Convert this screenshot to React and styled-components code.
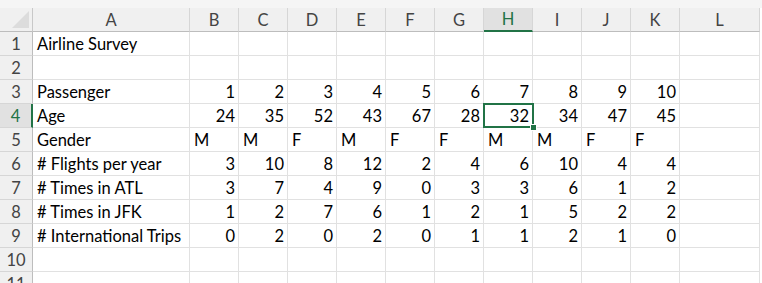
import React from "react";
import styled, { createGlobalStyle, css } from "styled-components";

const GlobalStyle = createGlobalStyle`
  html, body {
    margin: 0;
    padding: 0;
    background: #ffffff;
    overflow: hidden;
  }
  body {
    font-family: "Lato", "Liberation Sans", sans-serif;
  }
`;

const columns = ["A", "B", "C", "D", "E", "F", "G", "H", "I", "J", "K", "L"];

const rows = [
  ["Airline Survey"],
  [],
  ["Passenger", 1, 2, 3, 4, 5, 6, 7, 8, 9, 10],
  ["Age", 24, 35, 52, 43, 67, 28, 32, 34, 47, 45],
  ["Gender", "M", "M", "F", "M", "F", "F", "M", "M", "F", "F"],
  ["# Flights per year", 3, 10, 8, 12, 2, 4, 6, 10, 4, 4],
  ["# Times in ATL", 3, 7, 4, 9, 0, 3, 3, 6, 1, 2],
  ["# Times in JFK", 1, 2, 7, 6, 1, 2, 1, 5, 2, 2],
  ["# International Trips", 0, 2, 0, 2, 0, 1, 1, 2, 1, 0],
  [],
  [],
];

const activeCol = 7; // H
const activeRow = 4;

function App() {
  return (
    <>
      <GlobalStyle />
      <Sheet>
        <TopStrip />
        <Corner>
          <CornerTriangle viewBox="0 0 18 18">
            <polygon points="18,0 18,18 0,18" fill="#dcdcdc" />
          </CornerTriangle>
        </Corner>
        {columns.map((c, i) => (
          <ColHeader key={c} $active={i === activeCol}>
            {c}
          </ColHeader>
        ))}
        {rows.map((row, r) => (
          <React.Fragment key={r}>
            <RowHeader $active={r + 1 === activeRow}>{r + 1}</RowHeader>
            {columns.map((c, i) => {
              const v = row[i];
              const isNum = typeof v === "number";
              return (
                <Cell
                  key={c}
                  $align={isNum ? "right" : "left"}
                  $selected={r + 1 === activeRow && i === activeCol}
                >
                  {v}
                </Cell>
              );
            })}
          </React.Fragment>
        ))}
      </Sheet>
    </>
  );
}

export default App;

const Sheet = styled.div`
  display: grid;
  grid-template-columns: 33px 157px repeat(10, 49px) 80px 2px;
  grid-template-rows: 8px 24px;
  grid-auto-rows: 24px;
  width: 762px;
  font-size: 16.5px;
  color: #000;
`;

const TopStrip = styled.div`
  grid-column: 1 / -1;
  background: #f5f5f5;
`;

const Corner = styled.div`
  grid-column: 1;
  background: #f0f0f0;
  border-right: 1px solid #c8c8c8;
  border-bottom: 1px solid #bdbdbd;
  box-sizing: border-box;
  display: flex;
  align-items: flex-end;
  justify-content: flex-end;
  padding: 0 3px 3px 0;
`;

const CornerTriangle = styled.svg`
  width: 17px;
  height: 17px;
  display: block;
`;

const ColHeader = styled.div`
  box-sizing: border-box;
  background: #f0f0f0;
  border-right: 1px solid #d6d6d6;
  border-bottom: 1px solid #bdbdbd;
  display: flex;
  align-items: center;
  justify-content: center;
  color: #444;
  &:last-of-type {
    grid-column: span 2;
  }
  ${(p) =>
    p.$active &&
    css`
      background: #e1e1e1;
      color: #217346;
      border-bottom: 2px solid #217346;
    `}
`;

const RowHeader = styled.div`
  grid-column: 1;
  box-sizing: border-box;
  background: #f0f0f0;
  border-right: 1px solid #bdbdbd;
  border-bottom: 1px solid #d6d6d6;
  display: flex;
  align-items: center;
  justify-content: center;
  color: #444;
  ${(p) =>
    p.$active &&
    css`
      background: #e1e1e1;
      color: #217346;
      border-right: 2px solid #217346;
    `}
`;

const Cell = styled.div`
  box-sizing: border-box;
  position: relative;
  border-right: 1px solid #e1e1e1;
  border-bottom: 1px solid #e1e1e1;
  display: flex;
  align-items: center;
  justify-content: ${(p) => (p.$align === "right" ? "flex-end" : "flex-start")};
  padding: 0 3px 0 4px;
  white-space: nowrap;
  ${(p) =>
    p.$selected &&
    css`
      &::after {
        content: "";
        position: absolute;
        left: -1px;
        top: -1px;
        right: -2px;
        bottom: -1px;
        border: 2px solid #217346;
      }
      &::before {
        content: "";
        position: absolute;
        right: -5px;
        bottom: -4px;
        width: 5px;
        height: 5px;
        background: #217346;
        border: 1px solid #ffffff;
        z-index: 2;
      }
    `}
`;
